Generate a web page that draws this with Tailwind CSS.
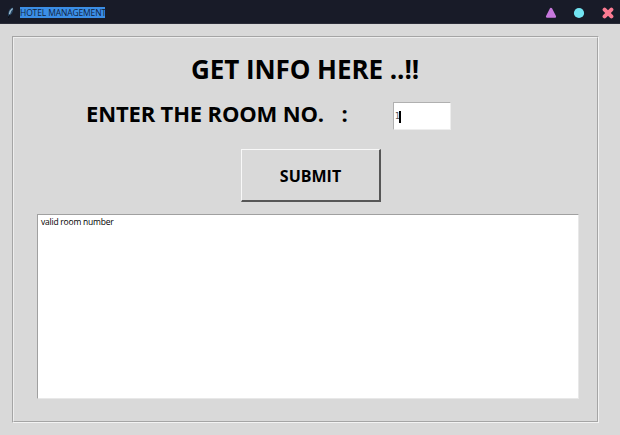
<!DOCTYPE html>
<html lang="en">
<head>
<meta charset="utf-8">
<title>HOTEL MANAGEMENT</title>
<script src="https://cdn.jsdelivr.net/npm/@tailwindcss/browser@4"></script>
</head>
<body class="flex h-[435px] w-[620px] flex-col overflow-hidden bg-[#d9d9d9] font-['Open_Sans','Noto_Sans',sans-serif] text-black">
<header class="flex h-6 shrink-0 items-center border-b border-[#2a2c38] bg-[#181b28] pl-[7px] pr-[6px] pt-[2px]">
  <svg class="h-3 w-[9px]" viewBox="0 0 9 12"><path d="M1 9.5 1.4 5.2Q2.5 1.2 5.8 .6Q7 3 4.8 6.6L2.4 8.9Z" fill="#294866"/><path d="M2.4 7.2Q3 3.5 5.6 1.5" fill="none" stroke="#9cbed3" stroke-width="1.3"/><path d="M1.4 11 2.5 8" stroke="#080d16"/></svg>
  <h1 class="ml-1 h-[11px] w-[85px] whitespace-nowrap bg-[#3b8ee6] text-[8.5px] leading-[11px] tracking-[-0.13px] text-[#10233f]">HOTEL MANAGEMENT</h1>
  <div class="ml-auto flex items-center">
    <svg class="h-3 w-3" viewBox="0 0 12 12"><path d="M6 2.2 9.8 9.5H2.2Z" fill="#c778dd" stroke="#c778dd" stroke-width="2.6" stroke-linejoin="round"/></svg>
    <svg class="ml-[16px] h-3 w-3" viewBox="0 0 12 12"><circle cx="6" cy="6" r="5.1" fill="#72e4f2"/></svg>
    <svg class="ml-[17px] h-3 w-3" viewBox="0 0 12 12"><path d="M2.6 2.6 9.4 9.4M9.4 2.6 2.6 9.4" stroke="#fb7b92" stroke-width="4" stroke-linecap="round"/></svg>
  </div>
</header>
<main class="ml-3 mt-3 h-[387px] w-[587px] border border-b-[#f3f3f3] border-l-[#a5a5a5] border-r-[#f3f3f3] border-t-[#a5a5a5]">
  <div class="flex h-full flex-col border border-b-[#a5a5a5] border-l-[#eeeeee] border-r-[#a5a5a5] border-t-[#eeeeee] pl-[23px]">
    <h2 class="ml-[154px] mt-[13px] h-9 whitespace-nowrap text-[26px] font-bold leading-9 tracking-[-0.06px]">GET INFO HERE ..!!</h2>
    <div class="mt-[15px] flex h-[28px]">
      <label class="ml-[49px] w-[307px] whitespace-pre text-[22px] font-bold leading-[22px] tracking-[-0.16px]">ENTER THE ROOM NO.   <span class="ml-[1px]">:</span></label>
      <div class="flex h-[28px] w-[58px] items-center border border-b-[#ededed] border-l-[#b0b0b0] border-r-[#ededed] border-t-[#b0b0b0] bg-white pl-px pt-[2px] font-['DejaVu_Sans',sans-serif] text-[8px] leading-3 text-[#555]"><span class="w-[4px]">1</span><i class="h-[12px] w-[1.5px] bg-black"></i></div>
    </div>
    <button class="ml-[204px] mt-[19px] h-[53px] w-[140px] shrink-0 border border-b-2 border-r-2 border-b-[#565656] border-l-[#f8f8f8] border-r-[#565656] border-t-[#f8f8f8] pt-[2px] text-[16px] font-bold">SUBMIT</button>
    <div class="mt-[12px] h-[185px] w-[542px] shrink-0 border border-b-[#e8e8e8] border-l-[#a0a0a0] border-r-[#e8e8e8] border-t-[#a0a0a0] bg-white pl-[3px] pt-px text-[8.5px] leading-[12px] tracking-[-0.22px]">valid room number</div>
  </div>
</main>
</body>
</html>
